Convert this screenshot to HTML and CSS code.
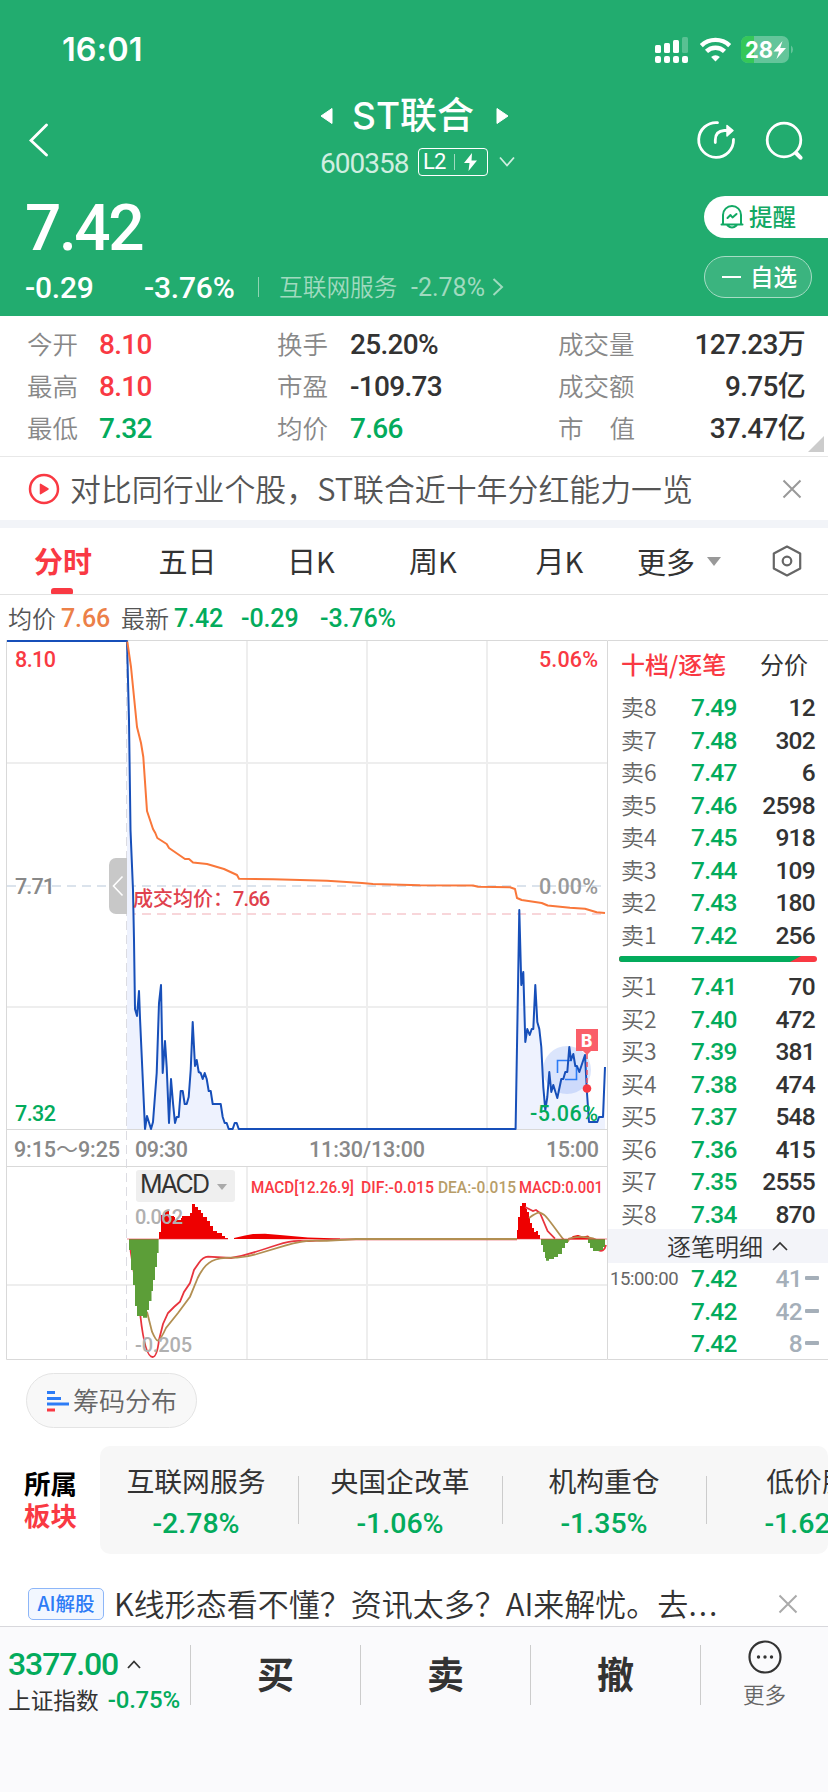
FILE: index.html
```html
<!DOCTYPE html>
<html lang="zh-CN">
<head>
  <meta charset="UTF-8">
  <meta name="viewport" content="width=device-width, initial-scale=1.0">
  <title>ST联合 600358</title>
  <link rel="stylesheet" href="styles.css">
</head>
<body>
  <header class="header">
    <div class="status">
      <span class="clock">16:01</span>
      <svg class="status-icons" width="140" height="28" viewBox="0 0 140 28">
        <g fill="#fff">
          <rect x="0" y="9" width="6" height="8" rx="1.5"/>
          <rect x="9" y="7" width="6" height="10" rx="1.5"/>
          <rect x="18" y="4" width="6" height="13" rx="1.5"/>
          <rect x="27" y="1" width="6" height="16" rx="1.5" opacity=".25"/>
          <rect x="0" y="20" width="6" height="7" rx="2"/>
          <rect x="9" y="20" width="6" height="7" rx="2"/>
          <rect x="18" y="20" width="6" height="7" rx="2"/>
          <rect x="27" y="20" width="6" height="7" rx="2"/>
        </g>
        <g fill="none" stroke="#fff" stroke-width="4.4">
          <path d="M46.3 9.6a20.5 20.5 0 0 1 28.4 0"/>
          <path d="M51.5 15.3a13 13 0 0 1 18 0"/>
        </g>
        <path d="M60.5 25.5l-4.4-4.6a6.5 6.5 0 0 1 8.8 0z" fill="#fff"/>
        <rect x="86" y="0" width="48" height="27" rx="7" fill="#64c59a"/>
        <path d="M93 0h6v27h-6a7 7 0 0 1-7-7V7a7 7 0 0 1 7-7z" fill="#35c759"/>
        <path d="M136 9.5a5 5 0 0 1 0 8z" fill="#64c59a"/>
        <text x="90" y="22" class="battery-text" textLength="28" lengthAdjust="spacingAndGlyphs">28</text>
        <path d="M127.5 5l-9 10.5h5.5l-2.5 7.5 9.5-11h-5.8z" fill="#fff"/>
      </svg>
    </div>

    <div class="titlebar">
      <svg class="back" width="20" height="34" viewBox="0 0 20 34"><path d="M17.5 2L2 17.5L17.5 32" fill="none" stroke="#fff" stroke-width="2.8" stroke-linecap="round"/></svg>
      <div class="title">
        <div class="name-line">
          <svg width="13" height="18" viewBox="0 0 13 18"><path d="M12 1.5v15L1 9z" fill="#fff" stroke="#fff" stroke-linejoin="round"/></svg>
          <h1>ST联合</h1>
          <svg width="13" height="18" viewBox="0 0 13 18"><path d="M1 1.5v15L12 9z" fill="#fff" stroke="#fff" stroke-linejoin="round"/></svg>
        </div>
        <div class="code-line">
          <span class="code num">600358</span>
          <span class="level"><span class="num">L2</span><i></i><svg width="13" height="18" viewBox="0 0 13 18"><path d="M8 0L0 10h5.5L4.5 18L13 7.500H7.5z" fill="#fff"/></svg></span>
          <svg width="16" height="12" viewBox="0 0 16 12"><path d="M1 1.5l7 8 7-8" fill="none" stroke="#d0eee0" stroke-width="1.8"/></svg>
        </div>
      </div>
      <svg class="share" width="40" height="40" viewBox="0 0 40 40">
        <g fill="none" stroke="#fff" stroke-width="2.8" stroke-linecap="round">
          <path d="M21.5 2.6A17.4 17.4 0 1 0 37.5 19.5"/>
          <path d="M19.3 22.5V20q0-9 9-9.5h6"/>
        </g>
        <path d="M31 5.5v10.5l6-5.5z" fill="#fff" stroke="#fff" stroke-width="1.5" stroke-linejoin="round"/>
      </svg>
      <svg class="search" width="40" height="40" viewBox="0 0 40 40"><circle cx="20" cy="20" r="16.8" fill="none" stroke="#fff" stroke-width="2.8"/><path d="M32.5 33.5l4 4.2" stroke="#fff" stroke-width="4" stroke-linecap="round"/></svg>
    </div>

    <div class="quote">
      <div class="quote-main">
        <div class="price num">7.42</div>
        <div class="change">
          <span class="num diff">-0.29</span>
          <span class="num pct">-3.76%</span>
          <i></i>
          <span class="sector">互联网服务</span>
          <span class="num sector-pct">-2.78%</span>
          <svg width="12" height="20" viewBox="0 0 12 20"><path d="M1.5 2l8.5 8-8.5 8" fill="none" stroke="#a0dabf" stroke-width="2"/></svg>
        </div>
      </div>
      <div class="quote-actions">
        <div class="pill remind">
          <svg width="24" height="24" viewBox="0 0 24 24" fill="none" stroke="#12a964" stroke-width="2" stroke-linecap="round" stroke-linejoin="round"><path d="M3 19.5V10a9 9 0 0 1 18 0v9.5M1.5 19.5h21M7.5 20.5q4.5 4 9 0"/><path d="M7.5 13l3-3 2 2.5 4-3.5"/></svg>
          <span>提醒</span>
        </div>
        <div class="pill fav"><i></i><span>自选</span></div>
      </div>
    </div>
  </header>

  <section class="stats">
    <span class="k">今开</span><span class="v num up">8.10</span>
    <span class="k">换手</span><span class="v num">25.20%</span>
    <span class="k">成交量</span><span class="v num end">127.23万</span>
    <span class="k">最高</span><span class="v num up">8.10</span>
    <span class="k">市盈</span><span class="v num">-109.73</span>
    <span class="k">成交额</span><span class="v num end">9.75亿</span>
    <span class="k">最低</span><span class="v num down">7.32</span>
    <span class="k">均价</span><span class="v num down">7.66</span>
    <span class="k spread"><b>市</b><b>值</b></span><span class="v num end">37.47亿</span>
    <span class="corner"></span>
  </section>

  <section class="notice">
    <svg width="32" height="32" viewBox="0 0 32 32"><circle cx="16" cy="16" r="14" fill="none" stroke="#f93943" stroke-width="2.5"/><path d="M12.5 11.3v9.4l7.5-4.7z" fill="#f93943" stroke="#f93943" stroke-width="1.5" stroke-linejoin="round"/></svg>
    <span class="notice-text">对比同行业个股，ST联合近十年分红能力一览</span>
    <svg class="close" width="20" height="20" viewBox="0 0 20 20"><path d="M1.5 1.5l17 17m0-17l-17 17" stroke="#999" stroke-width="2"/></svg>
  </section>

  <nav class="tabs">
    <span class="tab active">分时</span>
    <span class="tab">五日</span>
    <span class="tab k-day">日K</span>
    <span class="tab">周K</span>
    <span class="tab k-month">月K</span>
    <span class="tab more">更多<i></i></span>
    <svg width="32" height="34" viewBox="0 0 32 34" fill="none" stroke="#666" stroke-width="2.2" stroke-linejoin="round"><path d="M16 2.5L29.2 9.5V24.5L16 31.5L2.8 24.5V9.5z"/><circle cx="16" cy="17" r="4.3"/></svg>
  </nav>

  <div class="infoline">
    <span>均价</span><span class="num avg">7.66</span>
    <span class="latest">最新</span><span class="num down last">7.42</span>
    <span class="num down d1">-0.29</span><span class="num down">-3.76%</span>
  </div>

  <main class="board">
    <svg class="chart" width="608" height="720" viewBox="0 640 608 720">
      <!-- frame and grid -->
      <g fill="none" stroke="#eee" stroke-width="2">
        <path d="M7 763H607M7 1007H607M7 1285H607"/>
        <path d="M247 641V1129M367 641V1129M487 641V1129M247 1167V1359M367 1167V1359M487 1167V1359"/>
      </g>
      <path d="M126.5 641V1359" stroke="#dcdce2" stroke-dasharray="9 5" fill="none"/>
      <path d="M7 886H607" stroke="#dbe3ec" stroke-width="2" stroke-dasharray="9 6"/>
      <path d="M127 914H607" stroke="#f8d6da" stroke-width="2" stroke-dasharray="9 6"/>
      <path d="M6.5 640.5H607.5V1359.5H6.5zM6.5 1129.5H607.5M6.5 1166.5H607.5" fill="none" stroke="#d9d9d9"/>

      <!-- price -->
      <path fill="#eef2fe" d="M127 641L128 641 129 720 130.5 830 133 890 134 940 135 1009 137 1016 139 991 140 1018 145 1129 147 1116 151 1129 153 1122 156.7 1073 159 1003 161 985 162.7 1073 165 1041 166.7 1067 169 1123 171 1079 173 1103 175 1123 176.7 1117 178.7 1117 180.7 1091 182.7 1091 184.7 1104 186.7 1104 188.7 1097 190.7 1070 192.7 1022 195 1066 196.7 1060 198.7 1072 200.7 1073 202.7 1079 204.7 1073 206.7 1079 208.7 1091 210.7 1091 212.7 1104 220.7 1104 222.7 1117 224.7 1123 226.7 1123 228.7 1129H127z"/>
      <path fill="#eef2fe" d="M515.6 1129L519.3 910 521.3 985 523.3 972 525.3 1042 527.3 1029 529.7 1035 531.7 1029 533.3 1029 535.3 985 537.3 1022 539.3 1029 541.3 1047 543.3 1087 545.3 1110 547.3 1097 549.3 1072 551.3 1092 553.3 1085 557.3 1098 561.3 1079 563.3 1079 565.3 1072 567.3 1072 569.3 1047 571 1060 573.3 1054 575.3 1066 577 1066 579.3 1072 585 1055 587 1093 589 1122 597.3 1122 599 1117 603 1117 605 1067V1129z"/>
      <circle cx="567" cy="1070" r="24" fill="#4a7df0" fill-opacity=".2"/>
      <path d="M557.5 1073V1060.500H572M565 1079.500H576.5V1066" fill="none" stroke="#2d7cf6" stroke-width="1.6"/>
      <path class="line" stroke="#174fb9" d="M7 641H127L129 720 130.5 830 133 890 134 940 135 1009 137 1016 139 991 140 1018 145 1129 147 1116 151 1129 153 1122 156.7 1073 159 1003 161 985 162.7 1073 165 1041 166.7 1067 169 1123 171 1079 173 1103 175 1123 176.7 1117 178.7 1117 180.7 1091 182.7 1091 184.7 1104 186.7 1104 188.7 1097 190.7 1070 192.7 1022 195 1066 196.7 1060 198.7 1072 200.7 1073 202.7 1079 204.7 1073 206.7 1079 208.7 1091 210.7 1091 212.7 1104 220.7 1104 222.7 1117 224.7 1123 226.7 1123 228.7 1129 232.7 1129 234.7 1123 236.7 1123 238.7 1129H515.6L519.3 910 521.3 985 523.3 972 525.3 1042 527.3 1029 529.7 1035 531.7 1029 533.3 1029 535.3 985 537.3 1022 539.3 1029 541.3 1047 543.3 1087 545.3 1110 547.3 1097 549.3 1072 551.3 1092 553.3 1085 557.3 1098 561.3 1079 563.3 1079 565.3 1072 567.3 1072 569.3 1047 571 1060 573.3 1054 575.3 1066 577 1066 579.3 1072 585 1055 587 1093 589 1122 597.3 1122 599 1117 603 1117 605 1067"/>
      <path class="line" stroke="#f9773a" d="M127.3 641.7L131 667 137 727 141 743 143.3 757 147 811 153 829 155.3 833 157.3 838 166.7 844 169 848 185 859 189 859 193 862.6 207 864 224 869 237 875 239 878.7 273 879.3 300 880 327 880.7 362 883 373 884 420 885.3 473 885.5 478 886.7 510 887.3 515 889 517 898 521.7 900 541.7 903 547.7 905.5 570 907.7 585 908.7 596.7 912.3 605 913"/>

      <!-- buy mark -->
      <path d="M587 1054V1088" stroke="#e5596b" stroke-width="1.6" stroke-dasharray="5 3"/>
      <circle cx="587" cy="1088.5" r="4.3" fill="#f93943"/>
      <path d="M576 1029h22v22h-7l-4 4-4-4h-7z" fill="#fa5f69"/>
      <text x="581" y="1047" class="mark">B</text>

      <!-- collapse handle -->
      <path d="M127 858v56h-11a7 7 0 0 1-7-7v-42a7 7 0 0 1 7-7z" fill="#c8c8c8"/>
      <path d="M122.5 876.5l-9 9.5 9 9.5" fill="none" stroke="#fff" stroke-width="1.6"/>

      <g class="label">
        <text x="15" y="667" fill="#f93943" textLength="41">8.10</text>
        <text x="15" y="894" fill="#888" textLength="40">7.71</text>
        <text x="15" y="1120.5" fill="#03ab5c" textLength="41">7.32</text>
        <text x="539" y="667" fill="#f93943" textLength="59">5.06%</text>
        <text x="539" y="894" fill="#999" textLength="59">0.00%</text>
        <text x="530" y="1121" fill="#03ab5c" textLength="68">-5.06%</text>
        <text x="133" y="906" fill="#e0414d" class="cjk">成交均价：</text>
        <text x="233" y="906" fill="#e0414d" class="small" textLength="37">7.66</text>
        <g fill="#888">
          <text x="14" y="1157" textLength="42">9:15</text>
          <text x="56" y="1157" class="wave">～</text>
          <text x="78" y="1157" textLength="42">9:25</text>
          <text x="135" y="1157" textLength="53">09:30</text>
          <text x="309" y="1157" textLength="116">11:30/13:00</text>
          <text x="546" y="1157" textLength="53">15:00</text>
        </g>
      </g>

      <!-- macd -->
      <rect x="136" y="1170" width="99" height="32" rx="3" fill="#efefef"/>
      <text x="140" y="1193" class="macd-name" textLength="70">MACD</text>
      <path d="M217 1184h10l-5 6z" fill="#aaa"/>
      <g class="macd-values">
        <text x="251" y="1193" fill="#f93943" textLength="103" lengthAdjust="spacingAndGlyphs">MACD[12.26.9]</text>
        <text x="361" y="1193" fill="#f93943" textLength="73" lengthAdjust="spacingAndGlyphs">DIF:-0.015</text>
        <text x="438" y="1193" fill="#b89d68" textLength="78" lengthAdjust="spacingAndGlyphs">DEA:-0.015</text>
        <text x="519" y="1193" fill="#f93943" textLength="84" lengthAdjust="spacingAndGlyphs">MACD:0.001</text>
      </g>
      <g fill="#e00">
        <path d="M159 1239V1232h2V1215h4V1211h4V1216h5V1217h1V1220h6V1218h1V1216h8V1213h2V1204h3V1207h3V1210h3V1213h2V1217h4V1221h3V1226h3V1231h4V1233h5V1236h3V1238h3V1239z"/>
        <path d="M234 1239V1238L245 1235.5 253 1234 265 1233.7 280 1235 308 1237.5 340 1238.5V1239.5z"/>
        <path d="M517 1239V1230h1V1217h2V1206h2V1203h4V1209h1V1212h2V1218h1V1223h2V1228h2V1232h2V1231h2V1235h2V1239z"/>
        <path d="M569 1239.5L573 1236 578 1235 583 1236.5 588 1235.5 592 1239.5z"/>
      </g>
      <g class="thin">
        <path stroke="#e8343d" d="M130.5 1250L140.4 1316Q145 1357 152.6 1357Q157 1357 159 1340L163 1324 168 1313 174 1307 180 1301.7 184 1292 190 1283 194 1270 199 1262.7Q203 1257 208 1256.7L231 1258Q243 1256 253 1252.7T277 1245T300 1241T336 1239.3H517"/>
        <path stroke="#b28f52" d="M147 1311.7L152 1331.7Q156 1341 158 1340.7Q161 1339 166 1328L178 1313 190 1296.7 197.7 1278Q204 1265 212 1261T237 1257.7Q247 1257 257 1254T285 1245.7T316 1240.7T356 1239H517"/>
        <path stroke="#e8343d" d="M525 1207L533 1211 536 1210 540 1213 547.6 1231 555 1238.7M598 1250q6 3 8-5"/>
        <path stroke="#b28f52" d="M529 1218Q537 1212 540 1212.7Q544 1214 548 1219T560 1235T569 1238.7Q577 1236 588 1237.5T600 1245"/>
      </g>
      <g fill="#5c9e38">
        <path d="M129 1239V1250h2V1270h2V1285h2V1306h2V1316h6V1317.700h4V1310h2V1301h2.500V1291h1.500V1280h2V1267h2V1253h1.600V1239z"/>
        <path d="M541 1239V1245h2V1252h2V1258h1V1260.700h3V1259h5V1257h4V1254h4V1248h3V1243h3V1239z"/>
        <path d="M588 1239V1243h2V1248h3V1251h7V1250h3V1247h2V1239z"/>
      </g>
      <path d="M127 1239H228M517 1239H607" stroke="#e8343d" stroke-width=".6"/>
      <g class="label" fill="#b0b0b0">
        <text x="135" y="1224" class="small" textLength="48">0.062</text>
        <text x="135" y="1352" class="small" textLength="57">-0.205</text>
      </g>
    </svg>

    <aside class="book">
      <div class="book-head"><span class="up">十档/逐笔</span><span>分价</span></div>
      <div class="row"><span>卖8</span><b>7.49</b><em>12</em></div>
      <div class="row"><span>卖7</span><b>7.48</b><em>302</em></div>
      <div class="row"><span>卖6</span><b>7.47</b><em>6</em></div>
      <div class="row"><span>卖5</span><b>7.46</b><em>2598</em></div>
      <div class="row"><span>卖4</span><b>7.45</b><em>918</em></div>
      <div class="row"><span>卖3</span><b>7.44</b><em>109</em></div>
      <div class="row"><span>卖2</span><b>7.43</b><em>180</em></div>
      <div class="row"><span>卖1</span><b>7.42</b><em>256</em></div>
      <svg class="ratio" width="198" height="6" viewBox="0 0 198 6"><rect width="198" height="6" rx="3" fill="#f93943"/><path d="M3 0H182L171 6H3a3 3 0 0 1 0-6z" fill="#03ab5c"/></svg>
      <div class="row"><span>买1</span><b>7.41</b><em>70</em></div>
      <div class="row"><span>买2</span><b>7.40</b><em>472</em></div>
      <div class="row"><span>买3</span><b>7.39</b><em>381</em></div>
      <div class="row"><span>买4</span><b>7.38</b><em>474</em></div>
      <div class="row"><span>买5</span><b>7.37</b><em>548</em></div>
      <div class="row"><span>买6</span><b>7.36</b><em>415</em></div>
      <div class="row"><span>买7</span><b>7.35</b><em>2555</em></div>
      <div class="row"><span>买8</span><b>7.34</b><em>870</em></div>
      <div class="detail-head"><span>逐笔明细</span><svg width="16" height="10" viewBox="0 0 16 10"><path d="M1 9l7-7 7 7" fill="none" stroke="#333" stroke-width="1.7"/></svg></div>
      <div class="row tick"><span>15:00:00</span><b>7.42</b><em>41<i></i></em></div>
      <div class="row tick"><span></span><b>7.42</b><em>42<i></i></em></div>
      <div class="row tick"><span></span><b>7.42</b><em>8<i></i></em></div>
    </aside>
  </main>

  <div class="chips">
    <svg width="22" height="22" viewBox="0 0 22 22"><path d="M0 2.5h8M0 8.5h14M0 14h22" stroke="#2d7cf6" stroke-width="3"/><path d="M0 20h8" stroke="#f93943" stroke-width="3"/></svg>
    <span>筹码分布</span>
  </div>

  <section class="plates">
    <div class="plates-title"><span>所属</span><span class="up">板块</span></div>
    <div class="plates-list">
      <div class="plate"><span>互联网服务</span><b class="num down">-2.78%</b></div>
      <div class="plate"><span>央国企改革</span><b class="num down">-1.06%</b></div>
      <div class="plate"><span>机构重仓</span><b class="num down">-1.35%</b></div>
      <div class="plate"><span>低价股</span><b class="num down">-1.62%</b></div>
    </div>
  </section>

  <section class="ai">
    <span class="ai-badge">AI解股</span>
    <span class="ai-text">K线形态看不懂？资讯太多？AI来解忧。去<span class="dots">...</span></span>
    <svg class="close" width="20" height="20" viewBox="0 0 20 20"><path d="M1.5 1.5l17 17m0-17l-17 17" stroke="#aaa" stroke-width="2"/></svg>
  </section>

  <footer class="footer">
    <div class="index">
      <div class="index-top"><span class="num down">3377.00</span><svg width="14" height="10" viewBox="0 0 14 10"><path d="M1 9l6-6.5L13 9" fill="none" stroke="#333" stroke-width="1.8"/></svg></div>
      <div class="index-bottom"><span>上证指数</span><span class="num down">-0.75%</span></div>
    </div>
    <div class="trade">买</div>
    <div class="trade">卖</div>
    <div class="trade">撤</div>
    <div class="foot-more">
      <svg width="34" height="34" viewBox="0 0 34 34"><circle cx="17" cy="17" r="15.5" fill="none" stroke="#333" stroke-width="2.2"/><g fill="#333"><circle cx="10.5" cy="17" r="1.7"/><circle cx="17" cy="17" r="1.7"/><circle cx="23.5" cy="17" r="1.7"/></g></svg>
      <span>更多</span>
    </div>
  </footer>
</body>
</html>
```
FILE: styles.css
```css
* {
  box-sizing: border-box;
}
body {
  margin: 0;
  width: 828px;
  height: 1792px;
  overflow: hidden;
  background: #fff;
  color: #333;
  font-family: "Noto Sans CJK SC", sans-serif;
  font-weight: 400;
}
i, em {
  font-style: normal;
}
svg {
  display: block;
  flex: none;
}
.num {
  font-family: Roboto, "Noto Sans CJK SC", sans-serif;
  font-weight: 500;
  letter-spacing: -0.035em;
}
.up {
  color: #f93943;
}
.down {
  color: #03ab5c;
}

/* header */
.header {
  height: 316px;
  background: #22ac6f;
  color: #fff;
}
.status {
  display: flex;
  justify-content: space-between;
  height: 94px;
  padding: 36px 33px 0 62px;
}
.clock {
  font: 600 32.5px/28px Inter, sans-serif;
  letter-spacing: 0.1px;
}
.battery-text {
  font: 700 23px Inter, sans-serif;
  fill: #fff;
}
.titlebar {
  display: flex;
  height: 92px;
}
.back {
  margin: 29px 0 0 29px;
}
.title {
  width: 196px;
  margin-left: 271px;
}
.name-line {
  display: flex;
  align-items: center;
  height: 44px;
}
.name-line h1 {
  width: 124px;
  margin: 0 20px 0 19px;
  font: 500 37px/44px Inter, "Noto Sans CJK SC", sans-serif;
  white-space: nowrap;
}
.code-line {
  display: flex;
  align-items: center;
  height: 48px;
}
.code {
  width: 98px;
  padding-top: 2px;
  font-size: 28px;
  font-weight: 400;
  letter-spacing: -1px;
  color: #d0eee0;
}
.level {
  display: flex;
  flex: none;
  align-items: center;
  justify-content: space-between;
  width: 70px;
  height: 28px;
  margin-right: 11px;
  padding: 0 10px 0 4px;
  border: 1.5px solid #fff;
  border-radius: 4px;
  font-size: 22px;
  line-height: 24px;
}
.level .num {
  font-weight: 400;
}
.level i {
  width: 1px;
  height: 16px;
  background: #a0dabf;
}
.share {
  margin: 26px 0 0 180px;
}
.search {
  margin: 26px 0 0 28px;
}
.quote {
  display: flex;
  justify-content: space-between;
  height: 130px;
}
.price {
  height: 84px;
  padding-left: 25px;
  font-size: 64px;
  line-height: 86px;
  letter-spacing: -2.4px;
}
.change {
  display: flex;
  align-items: center;
  height: 34px;
  padding-left: 25px;
  font-size: 30px;
}
.change .diff, .change .pct {
  letter-spacing: -0.2px;
}
.diff {
  width: 119px;
}
.pct {
  width: 113px;
}
.change i {
  width: 1px;
  height: 20px;
  margin: 0 20px 0 1px;
  background: #8fd4b3;
}
.sector {
  width: 132px;
  padding-bottom: 2px;
  font-size: 23.7px;
  font-weight: 350;
  color: #a0dabf;
}
.change .sector-pct {
  width: 81px;
  font-size: 25px;
  font-weight: 400;
  letter-spacing: 0;
  color: #a0dabf;
}
.quote-actions {
  display: flex;
  flex-direction: column;
  gap: 18px;
  width: 124px;
  padding-top: 10px;
}
.pill {
  display: flex;
  align-items: center;
  height: 42px;
  font-size: 23.5px;
  font-weight: 500;
  border-radius: 21px;
}
.pill span {
  padding-bottom: 2px;
}
.remind {
  gap: 5px;
  padding-left: 16px;
  border-radius: 21px 0 0 21px;
  background: #fff;
  color: #12a964;
}
.fav {
  gap: 9px;
  width: 108px;
  padding-left: 17px;
  border: 1px solid #a7dcc5;
  background: #3bb47f;
}
.fav i {
  width: 19px;
  height: 2px;
  background: #fff;
}

/* stats */
.stats {
  position: relative;
  display: grid;
  grid-template-columns: 72px 178px 73px 208px 100px 147px;
  grid-auto-rows: 42px;
  align-items: center;
  height: 141px;
  padding: 7px 0 0 27px;
  border-bottom: 1px solid #e8e8e8;
}
.k {
  font-size: 25.5px;
  line-height: 40px;
  padding-bottom: 2px;
  font-weight: 350;
  color: #888;
}
.spread {
  display: flex;
  justify-content: space-between;
  width: 77px;
}
.spread b {
  font-weight: inherit;
}
.v {
  padding-top: 2px;
  font-size: 28px;
  line-height: 40px;
  letter-spacing: -0.025em;
}
.end {
  text-align: right;
}
.corner {
  position: absolute;
  right: 4px;
  bottom: 4px;
  border-left: 16px solid transparent;
  border-bottom: 16px solid #ccc;
}

/* notice */
.notice {
  display: flex;
  align-items: center;
  height: 71px;
  padding: 0 26px 0 28px;
  border-bottom: 8px solid #f2f4f8;
  color: #555;
}
.notice-text {
  flex: 1;
  margin-left: 10px;
  padding-bottom: 2px;
  font-size: 30.9px;
  font-weight: 350;
  line-height: 44px;
  white-space: nowrap;
}

/* tabs */
.tabs {
  display: flex;
  align-items: center;
  height: 67px;
  padding-left: 34px;
  border-bottom: 1px solid #e2e2e2;
  font-size: 29px;
}
.tab {
  position: relative;
  width: 124.5px;
  height: 66px;
  line-height: 64px;
}
.tab.k-day {
  width: 126px;
  padding-left: 4px;
}
.tab.k-month {
  padding-left: 2px;
}
.tab.active {
  color: #f93943;
  font-weight: 600;
}
.tab.active::after {
  content: "";
  position: absolute;
  left: 17px;
  bottom: 0;
  width: 22px;
  height: 6px;
  border-radius: 3px 3px 1px 1px;
  background: #f93943;
}
.tab.more {
  display: flex;
  align-items: center;
  width: 134px;
  margin-left: -21px;
}
.tab.more i {
  margin-left: 12px;
  border: 7px solid transparent;
  border-top: 9px solid #999;
  border-bottom: 0;
}

.infoline {
  display: flex;
  align-items: center;
  height: 45px;
  padding-left: 8px;
  font-size: 24px;
  line-height: 43px;
  font-weight: 350;
  color: #555;
}
.infoline .num {
  padding-top: 2px;
  font-size: 25px;
  letter-spacing: -0.1px;
}
.infoline .avg {
  width: 60px;
  margin-left: 5px;
  color: #ec8048;
}
.infoline .last {
  width: 67px;
  margin-left: 5px;
}
.infoline .d1 {
  width: 79px;
}

/* chart */
.board {
  display: flex;
  height: 720px;
}
.line {
  fill: none;
  stroke-width: 2;
  stroke-linejoin: round;
}
.thin {
  fill: none;
  stroke-width: 1.8;
}
.label {
  font: 500 21.5px Roboto, sans-serif;
}
.label .small {
  font-size: 20px;
}
.label .cjk {
  font: 500 20px "Noto Sans CJK SC", sans-serif;
}
.label .wave {
  font: 400 22px "Noto Sans CJK SC", sans-serif;
}
.mark {
  font: 800 17px Inter, sans-serif;
  fill: #fff;
}
.macd-name {
  font: 400 25px Inter, sans-serif;
  fill: #333;
}
.macd-values {
  font: 500 16px Roboto, sans-serif;
}

/* order book */
.book {
  width: 220px;
  border-top: 1px solid #d9d9d9;
  border-bottom: 1px solid #d9d9d9;
}
.book-head {
  display: flex;
  justify-content: space-between;
  height: 51px;
  padding: 0 20px 0 13px;
  font-size: 24px;
  line-height: 45px;
}
.book-head .up {
  font-weight: 500;
}
.row {
  display: grid;
  grid-template-columns: 70px 60px 64px;
  height: 32.5px;
  padding-left: 13px;
  line-height: 32.5px;
  font-size: 24.5px;
  letter-spacing: -0.03em;
}
.row span {
  font-size: 23px;
  line-height: 29px;
  letter-spacing: 0;
  font-weight: 350;
  color: #666;
}
.row b {
  font-family: Roboto, sans-serif;
  font-weight: 500;
  color: #03ab5c;
}
.row em {
  font-family: Roboto, sans-serif;
  font-weight: 500;
  text-align: right;
}
.ratio {
  margin: 4px 0 9px 11px;
}
.detail-head {
  display: flex;
  align-items: center;
  gap: 9px;
  height: 34px;
  margin-top: -2px;
  padding-left: 59px;
  background: #f3f4f9;
  font-size: 24px;
  font-weight: 350;
}
.detail-head span {
  padding-bottom: 2px;
}
.row.tick {
  grid-template-columns: 81px 60px 68px;
  padding-left: 2px;
}
.row.tick span {
  font: 400 18.5px/32.5px Roboto, sans-serif;
  letter-spacing: -0.4px;
}
.tick em {
  display: flex;
  align-items: center;
  justify-content: flex-end;
  gap: 3px;
  color: #a5afb9;
}
.tick i {
  width: 14px;
  height: 4px;
  margin-bottom: 2px;
  border-radius: 1px;
  background: #a5afb9;
}

/* chip distribution */
.chips {
  display: flex;
  align-items: center;
  gap: 4px;
  width: 171px;
  height: 55px;
  margin: 13px 0 18px 26px;
  padding-left: 20px;
  border: 1px solid #e4e4e4;
  border-radius: 28px;
  background: #f8f8f8;
  color: #666;
  font-size: 26px;
  font-weight: 350;
}
.chips span {
  padding-bottom: 3px;
}

/* plates */
.plates {
  display: flex;
  height: 108px;
}
.plates-title {
  display: flex;
  flex-direction: column;
  width: 100px;
  padding: 21px 0 0 24px;
  font-size: 26.5px;
  font-weight: 700;
  line-height: 31.5px;
  color: #000;
}
.plates-title .up {
  color: #f93943;
}
.plates-list {
  display: flex;
  width: 728px;
  overflow: hidden;
  border-radius: 10px;
  background: #f7f7f7;
}
.plate {
  display: flex;
  flex: none;
  flex-direction: column;
  align-items: center;
  position: relative;
  width: 204px;
  padding-top: 13px;
  font-size: 27.8px;
  line-height: 42px;
}
.plate:first-child {
  width: 198px;
  padding-right: 6px;
}
.plate + .plate::before {
  content: "";
  position: absolute;
  left: 0;
  top: 30px;
  height: 48px;
  border-left: 1px solid #ccc;
}
.plate b {
  margin-top: 2px;
  font-size: 28.5px;
  letter-spacing: 0;
}

/* ai tip */
.ai {
  display: flex;
  align-items: center;
  height: 72px;
  padding: 27px 30px 0 28px;
}
.ai-badge {
  width: 76px;
  height: 32px;
  border: 1.5px solid #8db6f8;
  border-radius: 5px;
  background: #f2f7ff;
  color: #2d7cf6;
  font-size: 19.5px;
  font-weight: 500;
  line-height: 28px;
  text-align: center;
}
.ai-text {
  flex: 1;
  margin-left: 10px;
  padding-bottom: 2px;
  font-size: 31px;
  font-weight: 350;
  line-height: 40px;
  white-space: nowrap;
}
.dots {
  letter-spacing: 2px;
}

/* footer */
.footer {
  display: flex;
  height: 167px;
  border-top: 1px solid #d8d8dc;
  background: #fafafc;
}
.index {
  width: 190px;
  padding: 17px 0 0 8px;
}
.index-top {
  display: flex;
  align-items: center;
  gap: 9px;
  height: 40px;
  font-size: 32px;
}
.index-bottom {
  display: flex;
  align-items: center;
  gap: 9px;
  height: 31px;
  font-size: 22.7px;
}
.index-bottom .num {
  font-size: 24px;
  letter-spacing: -0.2px;
}
.trade, .foot-more {
  width: 170px;
  height: 60px;
  margin-top: 18px;
  border-left: 1px solid #ccc;
  text-align: center;
}
.trade {
  font-size: 37px;
  font-weight: 600;
  line-height: 56px;
}
.foot-more {
  display: flex;
  flex-direction: column;
  align-items: center;
  width: 128px;
}
.foot-more svg {
  margin-top: -5px;
}
.foot-more span {
  margin-top: 5px;
  font-size: 21.5px;
  font-weight: 350;
  line-height: 30px;
  color: #666;
}
```
